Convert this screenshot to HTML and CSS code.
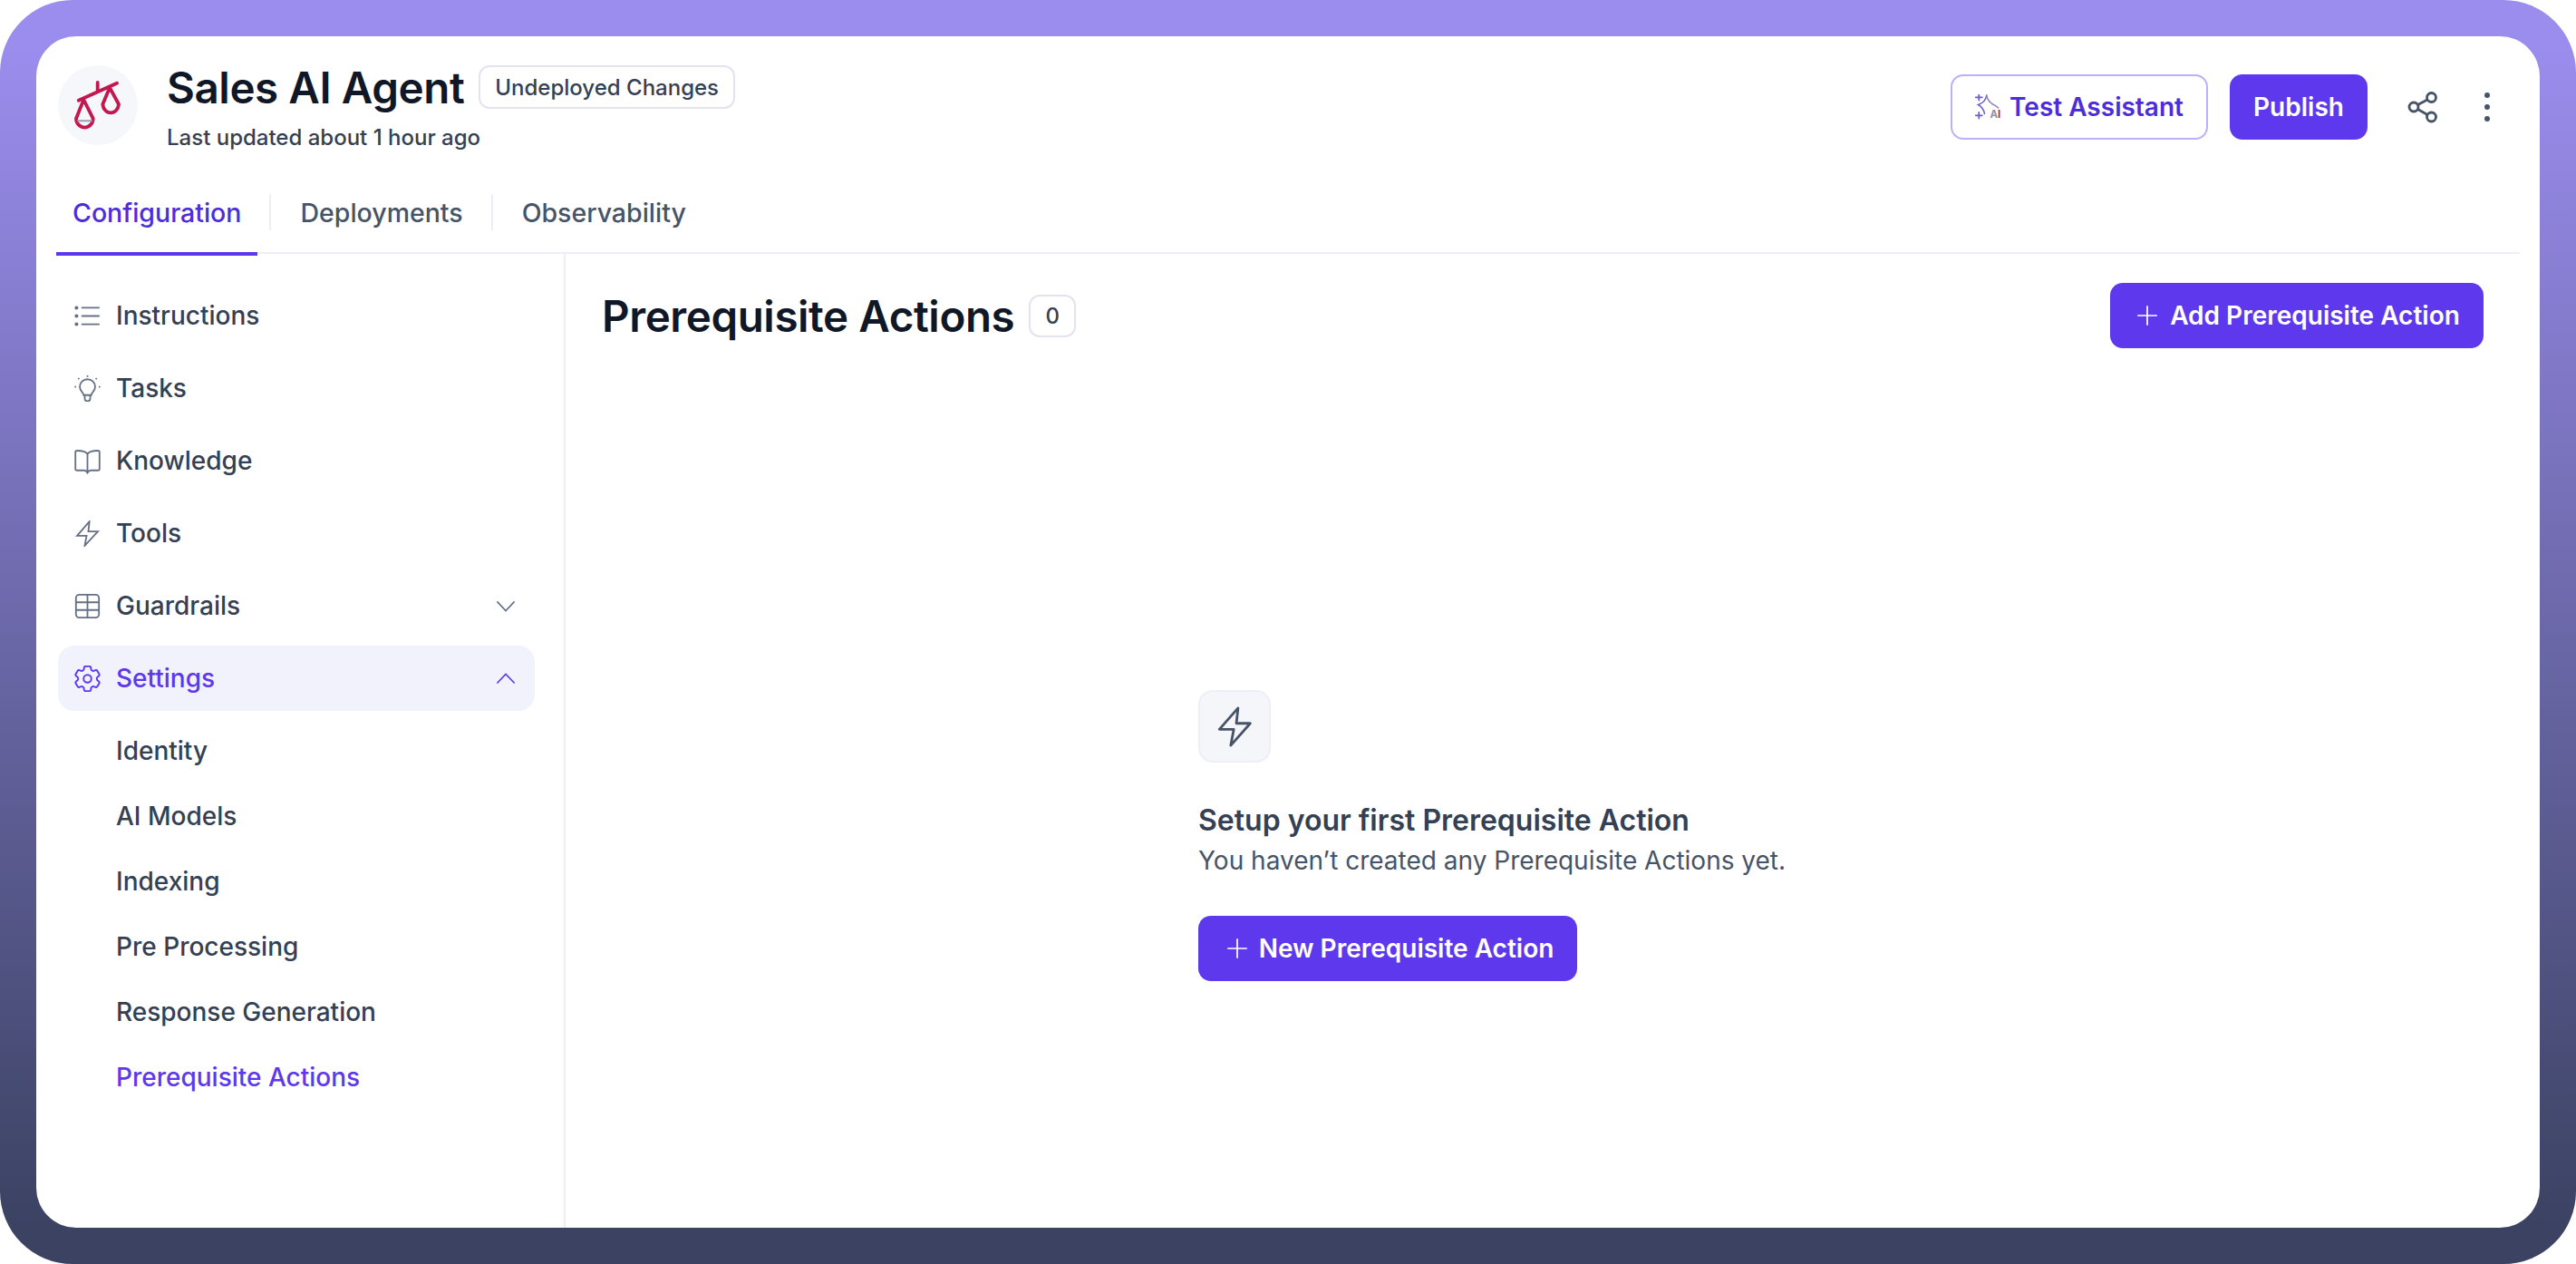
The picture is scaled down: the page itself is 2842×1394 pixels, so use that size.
FILE: index.html
```html
<!DOCTYPE html>
<html>
<head>
    <title>Sales AI Agent</title>
    <link rel="stylesheet" href="styles.css">
</head>
<body>
    <div class="frame">
        <div class="panel">
            <div class="top">
                <div class="avatar">
                    <svg width="88" height="88" viewBox="0 0 88 88" fill="none" stroke="#c2184f" stroke-width="3.800" stroke-linecap="round" stroke-linejoin="round">
                        <path d="M22.700 38.700 65 19.700M43.700 19v9.700"/>
                        <path d="M28.300 38 20 58.700a9.300 9.800 0 0 0 18.700 0Z"/>
                        <path d="M57 24.700 49.300 43a8.900 10.500 0 0 0 17.700 0Z"/>
                        <path d="M22 61.200h15" stroke="#9a9fb5" stroke-width="2"/>
                    </svg>
                </div>
                <div class="agent">
                    <div class="agent-line">
                        <h1>Sales AI Agent</h1>
                        <span class="badge">Undeployed Changes</span>
                    </div>
                    <p>Last updated about 1 hour ago</p>
                </div>
                <div class="top-actions">
                    <button class="btn-outline">
                        <svg width="30" height="28" viewBox="0 0 30 28" fill="none" stroke-linecap="round">
                            <path d="M.8 3.300h7M4.300 0v6.600M.8 23.300h7M4.300 20v6.600" stroke="#6d5bd0" stroke-width="1.800"/>
                            <path d="M12.700 1C12 6.500 9.500 9.500 3.500 11.500c3.500 2 6 4.500 7 10" stroke="#6d5bd0" stroke-width="1.500"/>
                            <path d="M12.700 1c1 5 3 7.500 6 9.500 2.500 1.500 5 2.500 7 4.500" stroke="#8b86b8" stroke-width="1.500"/>
                            <text x="16.500" y="25.500" class="ai-text">A<tspan fill="#c2184f">I</tspan></text>
                        </svg>
                        Test Assistant
                    </button>
                    <button class="btn btn-publish">Publish</button>
                    <svg class="share" width="36" height="36" viewBox="0 0 36 36" fill="none" stroke="#475467" stroke-width="2.800">
                        <circle cx="26.500" cy="7.500" r="5"/>
                        <circle cx="7" cy="18" r="5"/>
                        <circle cx="26.500" cy="29" r="5"/>
                        <path d="M11.500 15.500 22 10M11.500 20.500 22 26.500"/>
                    </svg>
                    <div class="dots"><i></i><i></i><i></i></div>
                </div>
            </div>
            <div class="tabs">
                <div class="tab active">Configuration</div>
                <div class="tab">Deployments</div>
                <div class="tab">Observability</div>
            </div>
            <div class="body">
                <div class="sidebar">
                    <div class="nav-item">
                        <svg class="ico" viewBox="0 0 24 24"><path d="M6.500 4.500H23M6.500 12H23M6.500 19.500H23"/><path d="M2 4.500h.01M2 12h.01M2 19.500h.01" stroke-width="3.400" stroke-linecap="round"/></svg>
                        <span>Instructions</span>
                    </div>
                    <div class="nav-item">
                        <svg class="ico" viewBox="0 0 24 24"><path d="M8.500 18c0-2.500-3.500-3.500-3.500-7.500a7 7 0 0 1 14 0c0 4-3.500 5-3.500 7.500ZM9.500 18v3a2.500 2.500 0 0 0 5 0v-3M12 0v1.500M.3 10.500h1.400M22.300 10.500h1.400M3.500 2.500l1 1M20.500 2.500l-1 1"/></svg>
                        <span>Tasks</span>
                    </div>
                    <div class="nav-item">
                        <svg class="ico" viewBox="0 0 24 24"><path d="M12 5.500C10.500 3.500 8 2.500 2.500 2.500A1.500 1.500 0 0 0 1 4v15A1.500 1.500 0 0 0 2.500 20.500H9c1.500 0 2.200.8 3 2.200.8-1.400 1.500-2.200 3-2.200h6.500A1.500 1.500 0 0 0 23 19V4a1.500 1.500 0 0 0-1.500-1.500C16 2.500 13.500 3.500 12 5.500Zm0 0v17.200"/></svg>
                        <span>Knowledge</span>
                    </div>
                    <div class="nav-item">
                        <svg class="ico" viewBox="0 0 24 24"><path d="M13.800 1 2.500 14h8.700L9.500 23 21.500 10h-8.700Z"/></svg>
                        <span>Tools</span>
                    </div>
                    <div class="nav-item">
                        <svg class="ico" viewBox="0 0 24 24"><rect x="1.500" y="1.500" width="21" height="21" rx="3"/><path d="M1.500 8.500h21M1.500 15.500h21M12 1.500v21"/></svg>
                        <span>Guardrails</span>
                        <svg class="chev" viewBox="0 0 24 24"><path d="m1.500 7 10.500 11L22.500 7"/></svg>
                    </div>
                    <div class="nav-item selected">
                        <svg class="ico gear" viewBox="2.500 2.500 19 19"><path d="M9.594 3.940c.09-.542.56-.94 1.110-.94h2.593c.55 0 1.020.398 1.110.94l.213 1.281c.063.374.313.686.645.870.074.040.147.083.22.127.325.196.72.257 1.075.124l1.217-.456a1.125 1.125 0 0 1 1.370.49l1.296 2.247a1.125 1.125 0 0 1-.26 1.431l-1.003.827c-.293.241-.438.613-.43.992a7.723 7.723 0 0 1 0 .255c-.008.378.137.75.43.991l1.004.827c.424.35.534.955.26 1.430l-1.298 2.247a1.125 1.125 0 0 1-1.369.491l-1.217-.456c-.355-.133-.75-.072-1.076.124a6.470 6.470 0 0 1-.22.128c-.331.183-.581.495-.644.869l-.213 1.281c-.09.543-.56.94-1.110.94h-2.594c-.55 0-1.019-.398-1.110-.94l-.213-1.281c-.062-.374-.312-.686-.644-.87a6.520 6.520 0 0 1-.22-.127c-.325-.196-.72-.257-1.076-.124l-1.217.456a1.125 1.125 0 0 1-1.369-.49l-1.297-2.247a1.125 1.125 0 0 1 .26-1.431l1.004-.827c.292-.24.437-.613.43-.991a6.932 6.932 0 0 1 0-.255c.007-.38-.138-.751-.43-.992l-1.004-.827a1.125 1.125 0 0 1-.26-1.430l1.297-2.247a1.125 1.125 0 0 1 1.370-.491l1.216.456c.356.133.751.072 1.076-.124.072-.044.146-.086.22-.128.332-.183.582-.495.644-.869l.214-1.280Z"/><circle cx="12" cy="12" r="2.800"/></svg>
                        <span>Settings</span>
                        <svg class="chev" viewBox="0 0 24 24"><path d="M1.500 18 12 7l10.500 11"/></svg>
                    </div>
                    <div class="sub-list">
                        <div class="sub-item">Identity</div>
                        <div class="sub-item">AI Models</div>
                        <div class="sub-item">Indexing</div>
                        <div class="sub-item">Pre Processing</div>
                        <div class="sub-item">Response Generation</div>
                        <div class="sub-item current">Prerequisite Actions</div>
                    </div>
                </div>
                <div class="main">
                    <div class="main-head">
                        <h2>Prerequisite Actions</h2>
                        <span class="count">0</span>
                        <button class="btn btn-add">
                            <svg class="plus" viewBox="0 0 24 24"><path d="M12 2v20M2 12h20"/></svg>
                            Add Prerequisite Action
                        </button>
                    </div>
                    <div class="empty">
                        <div class="empty-icon">
                            <svg width="45" height="45" viewBox="0 0 24 24" fill="none" stroke="#475467" stroke-width="1.500" stroke-linejoin="round"><path d="M13.800 1 2.800 13.500h8.500L9.500 23 21 10h-8.200Z"/></svg>
                        </div>
                        <h3>Setup your first Prerequisite Action</h3>
                        <p>You haven’t created any Prerequisite Actions yet.</p>
                        <button class="btn btn-new">
                            <svg class="plus" viewBox="0 0 24 24"><path d="M12 2v20M2 12h20"/></svg>
                            New Prerequisite Action
                        </button>
                    </div>
                </div>
            </div>
        </div>
    </div>
</body>
</html>
```

FILE: styles.css
```css
* {
    box-sizing: border-box;
}
body {
    margin: 0;
    background: white;
    font-family: Inter, "Noto Sans", sans-serif;
    color: #344054;
}
h1, h2, h3, p {
    margin: 0;
}
button {
    font-family: inherit;
    cursor: pointer;
}
.frame {
    width: 2842px;
    height: 1394px;
    padding: 40px;
    border-radius: 80px;
    background: linear-gradient(180deg, #9b8dee 3%, #3b4262 97%);
}
.panel {
    height: 100%;
    background: white;
    border-radius: 44px;
    display: flex;
    flex-direction: column;
    overflow: hidden;
}
.top {
    display: flex;
    align-items: flex-start;
    padding: 32px 51px 0 24px;
    height: 174px;
}
.avatar {
    width: 88px;
    height: 88px;
    border-radius: 50%;
    background: #f6f7fa;
    flex: none;
}
.agent {
    margin-left: 32px;
}
.agent-line {
    display: flex;
    align-items: center;
    gap: 16px;
    height: 48px;
}
h1 {
    font-size: 47.500px;
    font-weight: 600;
    color: #101828;
    letter-spacing: -0.4px;
}
.badge {
    height: 48px;
    padding: 0 16px;
    display: flex;
    align-items: center;
    border: 2px solid #e3e3f0;
    border-radius: 12px;
    font-size: 24px;
    font-weight: 500;
}
.agent p {
    margin-top: 17px;
    font-size: 24px;
    font-weight: 500;
}
.top-actions {
    margin-left: auto;
    margin-top: 10px;
    display: flex;
    align-items: center;
}
.btn-outline {
    height: 72px;
    width: 284px;
    display: flex;
    align-items: center;
    justify-content: center;
    gap: 8px;
    background: white;
    border: 2px solid #bdb0fb;
    border-radius: 14px;
    color: #4d2ddb;
    font-size: 28px;
    font-weight: 600;
}
.ai-text {
    font-family: Inter, sans-serif;
    font-size: 11.500px;
    font-weight: 700;
    fill: #8e8ea8;
}
.btn {
    height: 72px;
    display: flex;
    align-items: center;
    justify-content: center;
    background: #5d38ec;
    border: none;
    border-radius: 14px;
    color: white;
    font-size: 28px;
    font-weight: 600;
}
.btn-publish {
    width: 152px;
    margin-left: 24px;
}
.share {
    margin-left: 44px;
}
.dots {
    margin-left: 45px;
    width: 14px;
    display: flex;
    flex-direction: column;
    align-items: center;
    gap: 7px;
}
.dots i {
    width: 6px;
    height: 6px;
    border-radius: 50%;
    background: #475467;
}
.tabs {
    display: flex;
    align-items: flex-start;
    height: 66px;
    margin: 0 22px;
    border-bottom: 2px solid #eeeef6;
}
.tab {
    position: relative;
    height: 40px;
    padding: 0 31px 0 18px;
    display: flex;
    align-items: center;
    font-size: 28.500px;
    font-weight: 500;
    color: #475467;
    border-right: 2px solid #eeeef6;
}
.tab + .tab {
    padding-left: 32px;
}
.tab:last-child {
    border-right: none;
}
.tab.active {
    color: #4d2ddb;
    border-right: none;
    padding-right: 18px;
    height: 40px;
}
.tab.active::before {
    content: "";
    position: absolute;
    left: 0;
    right: 0;
    top: 64px;
    height: 4px;
    background: #5d38ec;
}
.tab.active::after {
    content: "";
    position: absolute;
    right: -15px;
    top: 0;
    height: 40px;
    width: 2px;
    background: #eeeef6;
}
.tab.active + .tab {
    margin-left: 15px;
}
.body {
    flex: 1;
    display: flex;
    min-height: 0;
}
.sidebar {
    width: 584px;
    padding: 32px 32px 0 24px;
    border-right: 2px solid #eeeef6;
    display: flex;
    flex-direction: column;
    gap: 8px;
    flex: none;
}
.nav-item {
    height: 72px;
    padding: 0 18px;
    display: flex;
    align-items: center;
    gap: 17px;
    border-radius: 18px;
    font-size: 28px;
    font-weight: 500;
}
.ico {
    width: 29px;
    height: 29px;
    fill: none;
    stroke: #667085;
    stroke-width: 1.500;
    flex: none;
}
.ico.gear {
    stroke-width: 1.250;
}
.chev {
    width: 22px;
    height: 22px;
    margin-left: auto;
    margin-right: 3px;
    fill: none;
    stroke: #667085;
    stroke-width: 1.800;
}
.nav-item.selected {
    background: #f2f2fd;
    color: #5d38ec;
}
.selected .ico, .selected .chev {
    stroke: #5d38ec;
}
.sub-list {
    display: flex;
    flex-direction: column;
}
.sub-item {
    height: 72px;
    padding-left: 64px;
    display: flex;
    align-items: center;
    font-size: 28px;
    font-weight: 500;
}
.sub-item.current {
    color: #5d38ec;
}
.main {
    flex: 1;
    padding: 32px 62px 0 40px;
}
.main-head {
    display: flex;
    align-items: center;
    height: 72px;
}
h2 {
    font-size: 47.500px;
    font-weight: 600;
    color: #101828;
    letter-spacing: -0.4px;
}
.count {
    width: 52px;
    height: 47px;
    margin-left: 16px;
    display: flex;
    align-items: center;
    justify-content: center;
    border: 2px solid #e3e3f0;
    border-radius: 12px;
    font-size: 24px;
    font-weight: 500;
}
.plus {
    width: 26px;
    height: 26px;
    fill: none;
    stroke: white;
    stroke-width: 1.600;
}
.btn-add {
    width: 412px;
    margin-left: auto;
    padding-left: 8px;
    gap: 12px;
}
.empty {
    width: 760px;
    margin: 377px auto 0;
}
.empty-icon {
    width: 80px;
    height: 80px;
    display: flex;
    align-items: center;
    justify-content: center;
    background: #f5f6fa;
    border: 2px solid #eeeef6;
    border-radius: 16px;
}
h3 {
    margin-top: 44px;
    font-size: 32px;
    font-weight: 600;
}
.empty p {
    margin-top: 8px;
    font-size: 28px;
    color: #475467;
}
.btn-new {
    width: 418px;
    margin-top: 44px;
    padding-left: 10px;
    gap: 11px;
}
```
